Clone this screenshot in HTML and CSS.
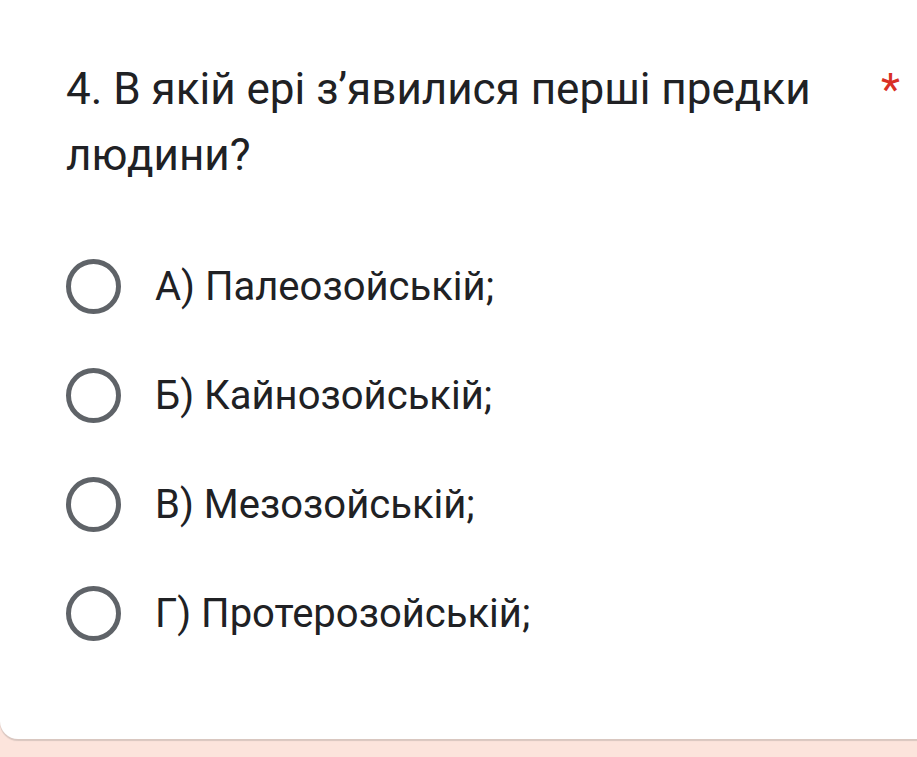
FILE: index.html
```html
<!DOCTYPE html>
<html lang="uk">
<head>
<meta charset="utf-8">
<link rel="stylesheet" href="styles.css">
</head>
<body>
<div class="page">
  <div class="card">
    <div class="question">
      <div class="title">4. В якій ері з’явилися перші предки людини?</div>
      <span class="required">*</span>
    </div>
    <div class="options">
      <label class="option"><span class="radio"></span><span class="label">А) Палеозойській;</span></label>
      <label class="option"><span class="radio"></span><span class="label">Б) Кайнозойській;</span></label>
      <label class="option"><span class="radio"></span><span class="label">В) Мезозойській;</span></label>
      <label class="option"><span class="radio"></span><span class="label">Г) Протерозойській;</span></label>
    </div>
  </div>
</div>
</body>
</html>
```

FILE: styles.css
```css
html, body {
  margin: 0;
  padding: 0;
  background: #fce4dc;
  font-family: Roboto, "Noto Sans", sans-serif;
  color: #202124;
}
.page {
  width: 917px;
  height: 757px;
  overflow: hidden;
}
.card {
  background: #ffffff;
  width: 940px;
  height: 739px;
  box-sizing: border-box;
  border-radius: 0 0 0 18px;
  box-shadow: 0 2px 1px rgba(60, 64, 67, 0.18);
  padding: 56px 0 0 66px;
}
.question {
  display: flex;
  align-items: flex-start;
}
.title {
  width: 760px;
  font-size: 44px;
  line-height: 66px;
  font-weight: 400;
  color: #202124;
}
.required {
  color: #d93025;
  font-size: 44px;
  line-height: 50px;
  margin-top: 9px;
  margin-left: 55px;
}
.options {
  margin-top: 71px;
  display: flex;
  flex-direction: column;
  gap: 54px;
}
.option {
  display: flex;
  align-items: center;
  height: 55px;
}
.radio {
  width: 45px;
  height: 45px;
  border: 5px solid #5f6368;
  border-radius: 50%;
  flex: none;
}
.label {
  margin-left: 34px;
  font-size: 40px;
  color: #202124;
}
```
